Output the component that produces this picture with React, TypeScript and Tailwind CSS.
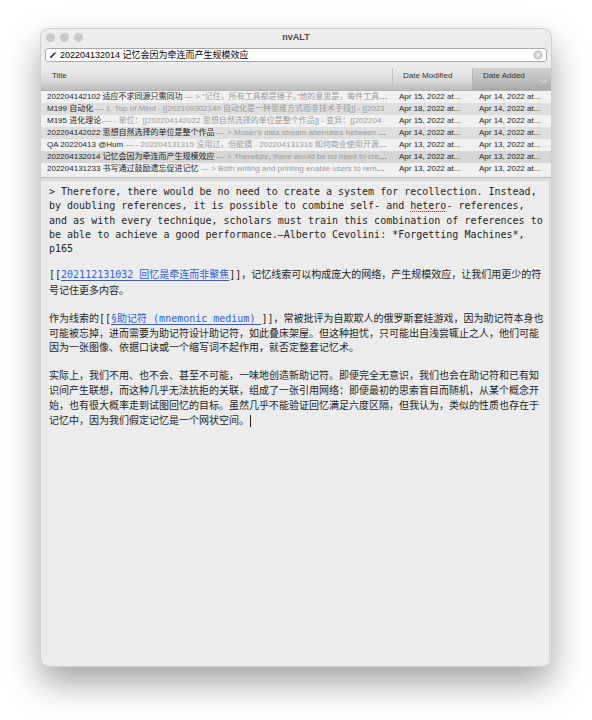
import React from "react";

const ui = { fontFamily: '"Liberation Sans", "Noto Sans CJK SC", sans-serif' };
const mono = { fontFamily: '"DejaVu Sans Mono", "Noto Sans CJK SC", monospace' };

// note list rows, alternating backgrounds; row 6 is the open note
const notes = [
  {
    title: "202204142102 适应不求同源只需同功",
    preview: "— > “记住，所有工具都是锤子。”他的意思是，每件工具都有它的用途",
    mod: "Apr 15, 2022 at...",
    add: "Apr 14, 2022 at...",
    bg: "bg-[#f1f1f1]",
  },
  {
    title: "M199 自动化",
    preview: "— 1. Top of Mind  - [[202109302140 自动化是一种思维方式而非技术手段]]  - [[2021",
    mod: "Apr 18, 2022 at...",
    add: "Apr 14, 2022 at...",
    bg: "bg-[#dedede]",
  },
  {
    title: "M195 进化理论",
    preview: "— - 单位：[[202204142022 思想自然选择的单位是整个作品]] - 变异：[[202204",
    mod: "Apr 15, 2022 at...",
    add: "Apr 14, 2022 at...",
    bg: "bg-[#f1f1f1]",
  },
  {
    title: "202204142022 思想自然选择的单位是整个作品",
    preview: "— > Moser's data stream alternates between notes",
    mod: "Apr 14, 2022 at...",
    add: "Apr 14, 2022 at...",
    bg: "bg-[#dedede]",
  },
  {
    title: "QA 20220413 @Hum",
    preview: "— - 202204131315 没用过，但能猜 - 202204131316 如何商业使用开源软件",
    mod: "Apr 13, 2022 at...",
    add: "Apr 13, 2022 at...",
    bg: "bg-[#f1f1f1]",
  },
  {
    title: "202204132014 记忆会因为牵连而产生规模效应",
    preview: "— > Therefore, there would be no need to create a system",
    mod: "Apr 14, 2022 at...",
    add: "Apr 13, 2022 at...",
    bg: "bg-[#d6d6d6]",
  },
  {
    title: "202204131233 书写通过鼓励遗忘促进记忆",
    preview: "— > Both writing and printing enable users to remember",
    mod: "Apr 13, 2022 at...",
    add: "Apr 13, 2022 at...",
    bg: "bg-[#f1f1f1]",
  },
];

const Link = ({ children }: { children: React.ReactNode }) => (
  <span className="text-[#2b5fd9] underline underline-offset-[2px]">{children}</span>
);

export default function App() {
  return (
    <div className="min-h-[720px] bg-white pt-[28px] pl-[40px]" style={ui}>
      <div className="w-[512px] h-[639px] rounded-[9px] overflow-hidden bg-[#ececec] border border-[#cfcfcf] shadow-[0_16px_34px_rgba(0,0,0,0.36)] flex flex-col">
        {/* title bar */}
        <div className="h-[16px] grid grid-cols-[1fr_auto_1fr] items-center px-[5px]">
          <div className="flex items-center gap-[5px] pt-[1px]">
            <span className="w-[9px] h-[9px] rounded-full bg-[#c9c9c9]" />
            <span className="w-[9px] h-[9px] rounded-full bg-[#c9c9c9]" />
            <span className="w-[9px] h-[9px] rounded-full bg-[#c9c9c9]" />
          </div>
          <div className="text-[9px] font-bold text-[#4b4b4b] pt-[2px]">nvALT</div>
          <div />
        </div>

        {/* search / title field */}
        <div className="px-[4px] pt-[3px] pb-[6px]">
          <div className="h-[14px] bg-white rounded-[3px] border border-[#a9a9a9] flex items-center pl-[3px] pr-[3px]">
            <svg width="8" height="8" viewBox="0 0 10 10" className="shrink-0">
              <path d="M1 9 L1.6 6.9 L7.4 1.1 L8.9 2.6 L3.1 8.4 Z" fill="#3a3a3a" />
            </svg>
            <span className="ml-[3px] text-[9px] leading-[12px] text-black flex-1">
              202204132014 记忆会因为牵连而产生规模效应
            </span>
            <svg width="10" height="10" viewBox="0 0 10 10" className="shrink-0">
              <circle cx="5" cy="5" r="4.3" fill="#d2d2d2" stroke="#b4b4b4" strokeWidth="0.6" />
              <path d="M3.3 3.3 L6.7 6.7 M6.7 3.3 L3.3 6.7" stroke="#ffffff" strokeWidth="1" />
            </svg>
          </div>
        </div>

        {/* column header */}
        <div className="h-[23px] grid grid-cols-[352px_80px_80px] text-[8px] text-[#333] border-b border-[#b3b3b3]">
          <div className="bg-gradient-to-b from-[#ececec] via-[#dcdcdc] to-[#bdbdbd] border-r border-[#c2c2c2] pl-[11px] pt-[2px]">
            Title
          </div>
          <div className="bg-gradient-to-b from-[#ececec] via-[#dcdcdc] to-[#bdbdbd] border-r border-[#b5b5b5] pl-[10px] pt-[2px]">
            Date Modified
          </div>
          <div className="relative bg-gradient-to-b from-[#d0d0d0] via-[#c0c0c0] to-[#a8a8a8] pl-[10px] pt-[2px]">
            Date Added
            <svg width="7" height="5" viewBox="0 0 7 5" className="absolute right-[6px] top-[11px]">
              <path d="M0.8 1 L3.5 3.8 L6.2 1" stroke="#e2e2e2" strokeWidth="1" fill="none" />
            </svg>
          </div>
        </div>

        {/* note list */}
        <div>
          {notes.map((n, i) => (
            <div
              key={i}
              className={`h-[12px] grid grid-cols-[352px_80px_80px] items-center text-[8px] leading-[12px] ${n.bg}`}
            >
              <div className="truncate pl-[6px] pr-[4px]">
                <span className="text-[#1e1e1e]">{n.title}</span>{" "}
                <span className="text-[#9b9b9b]">{n.preview}</span>
              </div>
              <div className="pl-[6px] text-[#1e1e1e] truncate">{n.mod}</div>
              <div className="pl-[6px] text-[#1e1e1e] truncate">{n.add}</div>
            </div>
          ))}
        </div>
        <div className="h-[2px] bg-[#efefef]" />
        <div className="h-[4px] border-t border-[#bcbcbc] bg-[#dcdcdc]" />

        {/* editor */}
        <div className="flex-1 flex">
          <div className="flex-1 pl-[8px] pt-[4px] text-[#262626]" style={mono}>
            <p className="w-[500px] text-[10px] leading-[14.3px] whitespace-nowrap">
              &gt; Therefore, there would be no need to create a system for recollection. Instead,
              <br />
              by doubling references, it is possible to combine self- and{" "}
              <span className="underline decoration-dotted decoration-[#e0393e] underline-offset-[2px]">hetero</span>-
              references,
              <br />
              and as with every technique, scholars must train this combination of references to
              <br />
              be able to achieve a good performance.—Alberto Cevolini: *Forgetting Machines*,
              <br />
              p165
            </p>
            <p className="w-[496px] mt-[11px] text-[10px] leading-[15.5px]">
              [[<Link>202112131032 回忆是牵连而非聚焦</Link>]]，记忆线索可以构成庞大的网络，产生规模效应，让我们用更少的符号记住更多内容。
            </p>
            <p className="w-[496px] mt-[14px] text-[10px] leading-[14.3px]">
              作为线索的[[<Link>§助记符 (mnemonic medium) </Link>]]，常被批评为自欺欺人的俄罗斯套娃游戏，因为助记符本身也可能被忘掉，进而需要为助记符设计助记符，如此叠床架屋。但这种担忧，只可能出自浅尝辄止之人，他们可能因为一张图像、依据口诀或一个缩写词不起作用，就否定整套记忆术。
            </p>
            <p className="w-[496px] mt-[13px] text-[10px] leading-[15px]">
              实际上，我们不用、也不会、甚至不可能，一味地创造新助记符。即便完全无意识，我们也会在助记符和已有知识间产生联想，而这种几乎无法抗拒的关联，组成了一张引用网络：即便最初的思索盲目而随机，从某个概念开始，也有很大概率走到试图回忆的目标。虽然几乎不能验证回忆满足六度区隔，但我认为，类似的性质也存在于记忆中，因为我们假定记忆是一个网状空间。
              <span className="inline-block w-px h-[12px] bg-[#222] align-middle ml-[1px]" />
            </p>
          </div>
          <div className="w-[2px] border-l border-[#d4d4d4] bg-[#e6e6e6]" />
        </div>
      </div>
    </div>
  );
}
